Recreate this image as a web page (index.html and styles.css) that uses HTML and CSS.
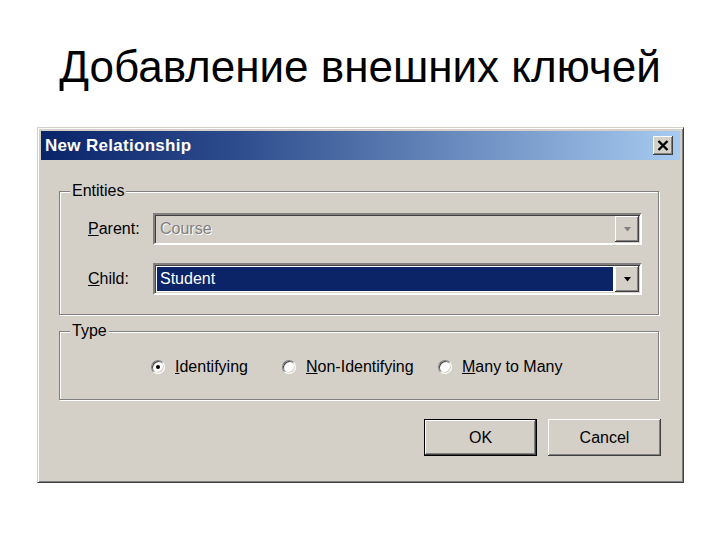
FILE: index.html
```html
<!DOCTYPE html>
<html>
<head>
<meta charset="utf-8">
<link rel="stylesheet" href="styles.css">
</head>
<body>
<h1 class="heading">Добавление внешних ключей</h1>
<div class="dialog">
  <div class="titlebar">
    <span class="title">New Relationship</span>
    <span class="close">
      <svg width="12" height="11" viewBox="0 0 12 11"><path d="M1.5 1 L10.5 10 M10.5 1 L1.5 10" stroke="#000" stroke-width="2.4" fill="none"/></svg>
    </span>
  </div>
  <div class="body">
    <fieldset class="group group-entities">
      <legend class="legend">Entities</legend>
      <div class="row">
        <label class="label"><u>P</u>arent:</label>
        <div class="combo combo-disabled">
          <span class="combo-text">Course</span>
          <span class="arrow"><svg width="9" height="5" viewBox="0 0 9 5"><path d="M1 0 H8 L4.5 4.5 Z" fill="#808080"/></svg></span>
        </div>
      </div>
      <div class="row row-second">
        <label class="label"><u>C</u>hild:</label>
        <div class="combo">
          <span class="combo-text combo-selected">Student</span>
          <span class="arrow"><svg width="9" height="5" viewBox="0 0 9 5"><path d="M1 0 H8 L4.5 4.5 Z" fill="#000"/></svg></span>
        </div>
      </div>
    </fieldset>
    <fieldset class="group group-type">
      <legend class="legend">Type</legend>
      <div class="radios">
        <label class="radio-item"><span class="radio radio-checked"></span><span><u>I</u>dentifying</span></label>
        <label class="radio-item"><span class="radio"></span><span><u>N</u>on-Identifying</span></label>
        <label class="radio-item"><span class="radio"></span><span><u>M</u>any to Many</span></label>
      </div>
    </fieldset>
    <div class="buttons">
      <button class="btn btn-default">OK</button>
      <button class="btn">Cancel</button>
    </div>
  </div>
</div>
</body>
</html>
```
FILE: styles.css
```css
html, body {
  margin: 0;
  padding: 0;
  background: #fff;
}
body {
  font-family: "Liberation Sans", Arial, sans-serif;
  width: 720px;
  height: 540px;
  overflow: hidden;
}
.heading {
  margin: 0;
  padding-top: 42px;
  font-size: 44px;
  line-height: 50px;
  font-weight: normal;
  text-align: center;
  color: #000;
}
.dialog {
  box-sizing: border-box;
  margin: 35px 0 0 37px;
  width: 647px;
  height: 356px;
  background: #d4d0c8;
  border: 1px solid;
  border-color: #d4d0c8 #404040 #404040 #d4d0c8;
  box-shadow: inset 1px 1px 0 #fff, inset -1px -1px 0 #808080;
  padding: 3px;
  font-size: 16px;
  color: #000;
}
.titlebar {
  height: 29px;
  display: flex;
  align-items: center;
  justify-content: space-between;
  padding: 0 7px 0 4px;
  background: linear-gradient(to right, #0a246a 0%, #2c4b8c 30%, #a6caf0 100%);
}
.title {
  color: #fff;
  font-weight: bold;
  font-size: 17px;
  letter-spacing: 0.3px;
}
.close {
  box-sizing: border-box;
  width: 20px;
  height: 19px;
  background: #d4d0c8;
  display: flex;
  align-items: center;
  justify-content: center;
  box-shadow: inset -1px -1px 0 #404040, inset 1px 1px 0 #fff, inset -2px -2px 0 #808080;
}
.close svg {
  display: block;
}
.body {
  padding: 0 21px 0 18px;
}
.group {
  margin: 0;
  border: 1px solid #808080;
  box-shadow: inset 1px 1px 0 #fff, 1px 1px 0 #fff;
  min-width: 0;
}
.legend {
  padding: 0 2px;
  line-height: 18px;
  background: #d4d0c8;
  font-size: 16px;
}
.group-entities {
  margin-top: 22px;
  padding: 13px 16px 19px 28px;
}
.group-entities .legend {
  margin-left: -18px;
}
.group-type {
  margin-top: 7px;
  padding: 18px 16px 23px 91px;
}
.group-type .legend {
  margin-left: -81px;
}
.row {
  display: flex;
  align-items: center;
  height: 32px;
}
.row-second {
  margin-top: 18px;
}
.label {
  width: 65px;
  flex: none;
}
.combo {
  flex: 1;
  box-sizing: border-box;
  height: 32px;
  display: flex;
  align-items: stretch;
  background: #fff;
  border: 2px solid;
  border-color: #808080 #fff #fff #808080;
  box-shadow: inset 1px 1px 0 #404040, inset -1px -1px 0 #d4d0c8;
  padding: 2px 1px 2px 2px;
}
.combo-disabled {
  background: #d4d0c8;
}
.combo-text {
  flex: 1;
  display: flex;
  align-items: center;
  padding-left: 3px;
  margin-right: 2px;
}
.combo-disabled .combo-text {
  color: #808080;
  text-shadow: 1px 1px 0 #fff;
}
.combo-selected {
  background: #0b2468;
  color: #fff;
}
.arrow {
  box-sizing: border-box;
  width: 24px;
  flex: none;
  margin: -1px 0;
  background: #d4d0c8;
  display: flex;
  align-items: center;
  justify-content: center;
  box-shadow: inset -1px -1px 0 #404040, inset 1px 1px 0 #fff, inset -2px -2px 0 #808080;
}
.radios {
  display: grid;
  grid-template-columns: 131px 156px auto;
  height: 18px;
  align-items: center;
}
.radio-item {
  display: flex;
  align-items: center;
  gap: 10px;
  line-height: 18px;
}
.radio {
  position: relative;
  box-sizing: border-box;
  width: 14px;
  height: 14px;
  border-radius: 50%;
  background: #fff;
  border: 1px solid;
  border-color: #808080 #fff #fff #808080;
  box-shadow: inset 1px 1px 0 #404040, inset -1px -1px 0 #d4d0c8;
  flex: none;
}
.radio-checked::after {
  content: "";
  position: absolute;
  left: 4px;
  top: 4px;
  width: 4px;
  height: 4px;
  border-radius: 50%;
  background: #000;
}
.buttons {
  display: flex;
  justify-content: flex-end;
  gap: 11px;
  margin: 19px -2px 0 0;
}
.btn {
  box-sizing: border-box;
  width: 113px;
  height: 37px;
  font-family: "Liberation Sans", Arial, sans-serif;
  font-size: 16px;
  color: #000;
  background: #d4d0c8;
  border: 0;
  padding: 0;
  box-shadow: inset -1px -1px 0 #404040, inset 1px 1px 0 #fff, inset -2px -2px 0 #808080;
}
.btn-default {
  border: 1px solid #000;
}
```
